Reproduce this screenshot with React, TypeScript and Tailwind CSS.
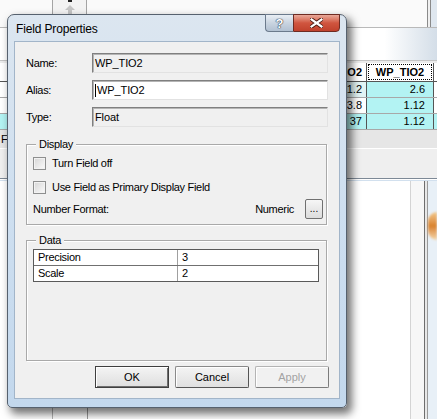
const CYAN = "bg-[#b3f3f3]";

export default function App() {
  return (
    <div className="relative h-[419px] w-[437px] overflow-hidden bg-white font-['Liberation_Sans',Arial,sans-serif] text-black">
      <Backdrop />
      <FieldPropertiesDialog />
    </div>
  );
}

function Backdrop() {
  return (
    <div className="flex h-full flex-col">
      {/* toolbar strip */}
      <div className="flex h-[27px] bg-[#fafafa]">
        <div className="w-[52px]" />
        <div className="flex h-[15px] w-[35px] justify-center border-x border-b border-[#a4a4a4] bg-[#f3f3f3]">
          <svg width="16" height="15" viewBox="0 0 16 15">
            <rect x="6" y="0" width="4" height="2" fill="#222" />
            <path d="M8 5 L13 10 L10 10 L10 14 L6 14 L6 10 L3 10 Z" fill="#b9b9b9" opacity="0.8" />
          </svg>
        </div>
        <div className="flex-1" />
        <div className="w-px bg-[#8a8a8a]" />
        <div className="w-[2px] bg-[#f0f0f0]" />
        <div className="w-px bg-[#8a8a8a]" />
        <div className="w-[6px] bg-[#dfe7ef]" />
      </div>
      <div className="h-px bg-[#b9b9b9]" />
      <div className="h-[32px] bg-gradient-to-r from-white from-[88%] to-[#d4dee8]" />
      <div className="h-[3px] border-t border-[#c4c4c4] bg-[#ececec]" />

      {/* attribute table */}
      <div className="flex h-[19px] border-b border-[#555] bg-white text-[11px] font-bold leading-[18px]">
        <div className="w-[8px] border-r border-[#555]" />
        <div className="w-[359px] border-r border-[#555] pr-[4px] text-right">WP_SIO2</div>
        <div className="w-[67px] border-r border-[#555] p-px">
          <div className="h-full border border-dotted border-black text-center leading-[15px]">WP_TIO2</div>
        </div>
        <div className="flex-1" />
      </div>
      <TableRow a="1.2" b="2.6" first />
      <TableRow a="3.8" b="1.12" />
      <TableRow a="37" b="1.12" selected />

      {/* status band */}
      <div className="flex h-[18px] items-center bg-[#e6e6e6] pl-px text-[11px]">
        <span>F:</span>
      </div>
      <div className="h-[30px] border-t border-white bg-[#efefef]" />
      <div className="h-[3px] border-t border-[#7d8996] border-b border-b-[#d2e0ee] bg-white" />

      {/* lower panes */}
      <div className="flex flex-1">
        <div className="w-[52px] bg-white" />
        <div className="w-px bg-[#b4b4b4]" />
        <div className="w-[34px]" />
        <div className="w-px bg-[#9a9a9a]" />
        <div className="flex-1" />
        <div className="w-px bg-[#d4d4d4]" />
        <div className="w-[13px] bg-[#f7f7f7]" />
        <div className="w-px bg-[#6e6e6e]" />
        <div className="w-[2px] bg-[#e8e8e8]" />
        <div className="w-px bg-[#9a9a9a]" />
        <div className="w-[9px] bg-[#e8f0f7]">
          <div className="mt-[31px] h-[28px] rounded-l-full bg-gradient-to-b from-[#f2c98c] via-[#d9822b] to-[#f3d7aa] blur-[1px]" />
        </div>
      </div>
    </div>
  );
}

function TableRow({ a, b, first, selected }: { a: string; b: string; first?: boolean; selected?: boolean }) {
  const rowBg = selected ? CYAN : "bg-white";
  return (
    <div className={`flex h-[16px] border-b border-[#a8a8a8] text-[11px] leading-[15px] ${rowBg}`}>
      <div className="w-[8px] border-r border-[#555]" />
      <div className={`w-[359px] border-r border-[#555] pr-[4px] text-right ${first ? "bg-[#e2f4f4]" : ""}`}>{a}</div>
      <div className={`w-[67px] border-r border-[#555] pr-[8px] text-right ${CYAN}`}>{b}</div>
      <div className="flex-1" />
    </div>
  );
}

function FieldPropertiesDialog() {
  return (
    <div className="absolute left-[7px] top-[14px] flex h-[394px] w-[340px] flex-col rounded-t-[7px] rounded-b-[5px] border border-[#56616e] bg-gradient-to-b from-[#dce6f0] via-[#cedff0] to-[#c3d8ed] shadow-[4px_5px_9px_1px_rgba(0,0,0,0.55)]">
      {/* title bar */}
      <div className="flex h-[27px] items-start pl-[8px] pr-[6px]">
        <span className="mt-[7px] text-[12px] leading-[14px] tracking-[-0.15px]">Field Properties</span>
        <div className="-mt-px ml-auto flex">
          <div className="flex h-[18px] w-[28px] items-center justify-center rounded-bl-[4px] border border-r-0 border-[#6b7a8c] bg-gradient-to-b from-[#e9eef4] via-[#c9d4e0] to-[#b2c1d2]">
            <span className="text-[13px] font-bold leading-none text-white [text-shadow:0_0_1px_#2c3a4a,0_0_1px_#2c3a4a,0_0_1px_#2c3a4a]">?</span>
          </div>
          <div className="flex h-[18px] w-[47px] items-center justify-center rounded-br-[4px] border border-[#6e2b22] bg-gradient-to-b from-[#e8a899] via-[#d0553f] to-[#c0412c]">
            <svg width="13" height="10" viewBox="0 0 13 10">
              <path d="M1 1 L12 9 M12 1 L1 9" stroke="#4a1a12" strokeWidth="4" strokeLinecap="square" />
              <path d="M1.5 1.5 L11.5 8.5 M11.5 1.5 L1.5 8.5" stroke="#fff" strokeWidth="2.2" strokeLinecap="square" />
            </svg>
          </div>
        </div>
      </div>

      {/* client area */}
      <div className="mx-[7px] flex h-[356px] flex-col bg-[#f0f0f0] px-[11px] pt-[11px] text-[11px] leading-[13px] tracking-[-0.3px] shadow-[0_0_0_1px_#a2b5c9]">
        <div className="flex flex-col gap-[7px]">
          <FieldRow label="Name:" value="WP_TIO2" readOnly />
          <FieldRow label="Alias:" value="WP_TIO2" caret />
          <FieldRow label="Type:" value="Float" readOnly />
        </div>

        <GroupBox title="Display" className="mt-[17px] h-[81px] pl-[6px] pr-[3px] pt-[12px]">
          <Check label="Turn Field off" />
          <div className="mt-[11px]">
            <Check label="Use Field as Primary Display Field" />
          </div>
          <div className="mt-[5px] flex h-[20px] items-center">
            <span>Number Format:</span>
            <span className="ml-auto">Numeric</span>
            <div className="ml-[11px] flex h-[20px] w-[18px] items-end justify-center rounded-[2px] border border-[#707070] bg-gradient-to-b from-[#f6f6f6] to-[#dcdcdc] pb-[4px] text-[10px] leading-none tracking-normal">
              ...
            </div>
          </div>
        </GroupBox>

        <GroupBox title="Data" className="mt-[15px] h-[121px] pl-[6px] pt-[8px]">
          <div className="w-[286px] border border-[#5a5a5a] bg-white">
            <div className="flex h-[16px] border-b border-[#707070]">
              <div className="w-[144px] border-r border-[#a0a0a0] pl-[4px] leading-[15px]">Precision</div>
              <div className="flex-1 pl-[4px] leading-[15px]">3</div>
            </div>
            <div className="flex h-[15px]">
              <div className="w-[144px] border-r border-[#a0a0a0] pl-[4px] leading-[15px]">Scale</div>
              <div className="flex-1 pl-[4px] leading-[15px]">2</div>
            </div>
          </div>
        </GroupBox>

        <div className="-mr-px mt-[5px] flex justify-end gap-[6px]">
          <button className="h-[22px] w-[74px] border border-[#3f3f3f] bg-gradient-to-b from-[#f4f4f4] to-[#dedede] tracking-normal shadow-[inset_1px_1px_0_#fff,inset_-1px_-1px_0_#6f6f6f]">
            OK
          </button>
          <button className="h-[22px] w-[74px] rounded-[2px] border border-[#8a8a8a] border-b-[#555] border-r-[#555] bg-gradient-to-b from-[#f4f4f4] to-[#e0e0e0] tracking-normal shadow-[inset_1px_1px_0_#fff]">
            Cancel
          </button>
          <button className="h-[22px] w-[74px] rounded-[2px] border border-[#b4b4b4] border-b-[#7c7c7c] border-r-[#7c7c7c] bg-[#f1f1f1] tracking-normal text-[#a3a3a3] shadow-[inset_1px_1px_0_#fff]">
            Apply
          </button>
        </div>
      </div>
    </div>
  );
}

function FieldRow({ label, value, readOnly, caret }: { label: string; value: string; readOnly?: boolean; caret?: boolean }) {
  return (
    <div className="flex items-center">
      <span className="w-[66px]">{label}</span>
      <div
        className={`flex h-[20px] w-[236px] items-center border border-l-[#7f7f7f] border-t-[#7f7f7f] border-b-[#e2e2e2] border-r-[#e2e2e2] pl-[2px] text-[11px] shadow-[inset_1px_1px_0_#b4b4b4] ${
          readOnly ? "bg-[#f0f0f0]" : "bg-white"
        }`}
      >
        {caret && <span className="mr-px h-[13px] w-px bg-black" />}
        <span className="tracking-[-0.1px]">{value}</span>
      </div>
    </div>
  );
}

function GroupBox({ title, className, children }: { title: string; className: string; children: React.ReactNode }) {
  return (
    <div className={`relative w-[301px] border border-[#a9a9a9] shadow-[inset_1px_1px_0_#fff,1px_1px_0_#fff] ${className}`}>
      <span className="absolute -top-[7px] left-[9px] bg-[#f0f0f0] px-[3px]">{title}</span>
      {children}
    </div>
  );
}

function Check({ label }: { label: string }) {
  return (
    <div className="flex h-[13px] items-center gap-[6px]">
      <span className="h-[13px] w-[13px] border border-[#8e8f8f] bg-gradient-to-br from-[#d6d6d6] to-[#fbfbfb] shadow-[inset_0_0_0_1px_#f2f2f2]" />
      <span>{label}</span>
    </div>
  );
}
